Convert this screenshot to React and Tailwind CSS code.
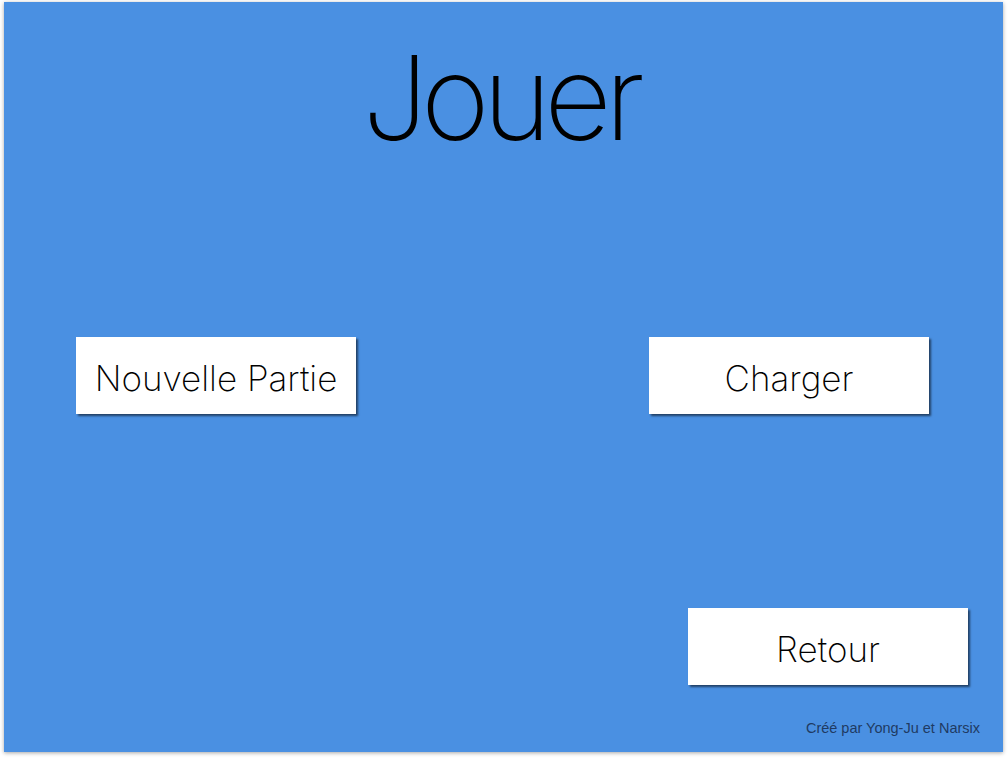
export default function App() {
  const btn =
    'flex h-[77px] w-[280px] items-center justify-center bg-white pt-[5px] text-[35px] font-extralight leading-none text-black shadow-[2px_2px_2px_rgba(0,0,0,0.55)]';

  return (
    <div className="min-h-screen w-[1008px] bg-white pl-[4px] pt-[2px] font-['Inter','Liberation_Sans',sans-serif]">
      <div className="flex h-[750px] w-[999px] flex-col bg-[#4a90e2] shadow-[0_1px_4px_rgba(0,0,0,0.35)]">
        <h1 className="mt-[37px] pr-[7px] text-center text-[117px] font-extralight leading-[117px] tracking-[-7px] text-black">
          Jouer
        </h1>

        <div className="mt-[181px] flex justify-between pl-[72px] pr-[74px]">
          <button className={btn}>Nouvelle Partie</button>
          <button className={btn}>Charger</button>
        </div>

        <div className="mt-[194px] flex justify-end pr-[35px]">
          <button className={btn}>Retour</button>
        </div>

        <p className="mt-[33px] pr-[23px] text-right font-['Liberation_Sans',sans-serif] text-[14.5px] text-[#1f3b63]">
          Créé par Yong-Ju et Narsix
        </p>
      </div>
    </div>
  );
}
